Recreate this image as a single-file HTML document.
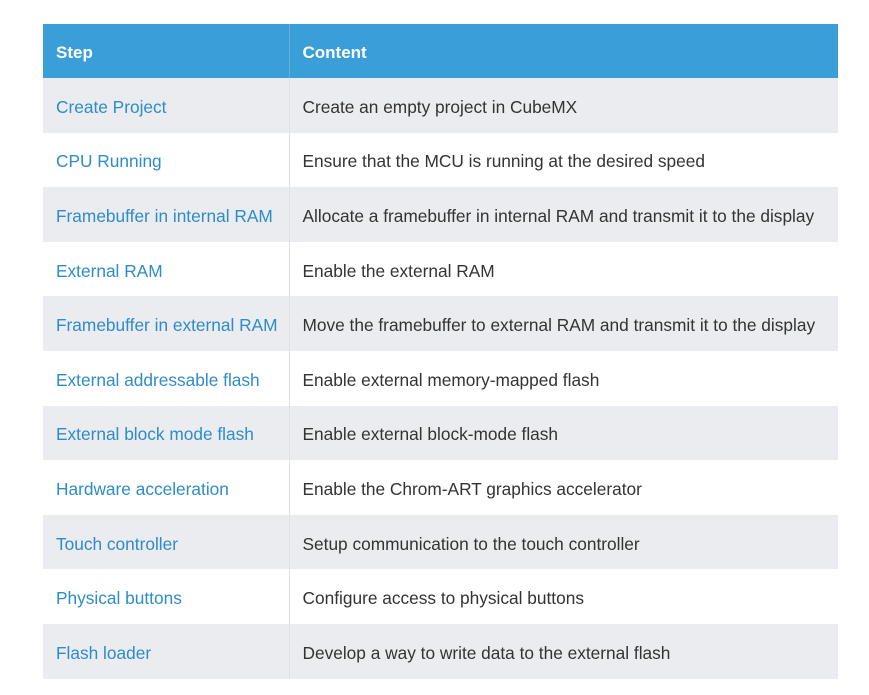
<!DOCTYPE html>
<html><head><style>
body{margin:0;background:#fff;font-family:"Liberation Sans",sans-serif;}
table{position:absolute;left:43px;top:24px;width:795px;border-collapse:collapse;font-size:17.3px;}
th{background:#3a9fd8;color:#fff;text-align:left;font-weight:bold;height:54px;padding:4px 0 0 13px;box-sizing:border-box;font-size:17px;}
td{height:54.6px;padding:4px 0 0 13px;color:#333;box-sizing:border-box;}
td:first-child{color:#2e8cc8;width:246px;}
th:first-child{width:246px;border-right:1px solid #5db0e0;}
td:first-child{border-right:1px solid #dde0e5;}
tr:nth-child(even) td{background:#ebecf0;}
</style></head><body>
<table>
<tr><th>Step</th><th>Content</th></tr>
<tr><td>Create Project</td><td>Create an empty project in CubeMX</td></tr>
<tr><td>CPU Running</td><td>Ensure that the MCU is running at the desired speed</td></tr>
<tr><td>Framebuffer in internal RAM</td><td>Allocate a framebuffer in internal RAM and transmit it to the display</td></tr>
<tr><td>External RAM</td><td>Enable the external RAM</td></tr>
<tr><td>Framebuffer in external RAM</td><td>Move the framebuffer to external RAM and transmit it to the display</td></tr>
<tr><td>External addressable flash</td><td>Enable external memory-mapped flash</td></tr>
<tr><td>External block mode flash</td><td>Enable external block-mode flash</td></tr>
<tr><td>Hardware acceleration</td><td>Enable the Chrom-ART graphics accelerator</td></tr>
<tr><td>Touch controller</td><td>Setup communication to the touch controller</td></tr>
<tr><td>Physical buttons</td><td>Configure access to physical buttons</td></tr>
<tr><td>Flash loader</td><td>Develop a way to write data to the external flash</td></tr>
</table>
</body></html>
